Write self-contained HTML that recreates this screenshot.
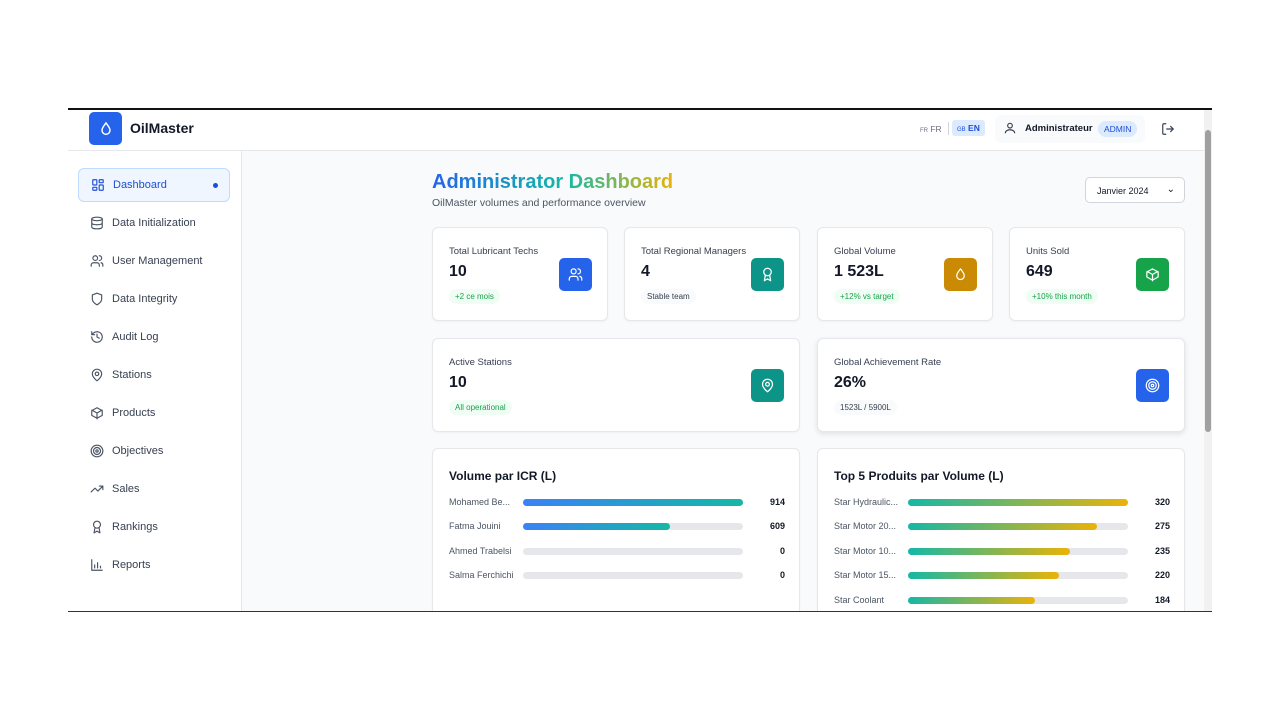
<!DOCTYPE html><html><head><meta charset="utf-8"><style>
*{box-sizing:border-box;margin:0;padding:0}
body{width:1280px;height:720px;background:#fff;font-family:"Liberation Sans",sans-serif;position:relative;overflow:hidden;color:#111827}
.frame{position:absolute;left:68px;top:108px;width:1144px;height:504px;border-top:2px solid #111;border-bottom:1px solid #333;overflow:hidden;background:#f8fafc}
.hdr{position:absolute;left:0;top:0;width:1136px;height:41px;background:#fff;border-bottom:1px solid #e5e7eb}
.side{position:absolute;left:0;top:41px;width:174px;height:470px;background:#fff;border-right:1px solid #e5e7eb}
.a{position:absolute}
.nav{position:absolute;left:10px;width:152px;height:34px;display:flex;align-items:center;padding-left:12px;font-size:11px;color:#374151;gap:8px}
.nav svg{width:14px;height:14px;fill:none;stroke:#4b5563;stroke-width:2;stroke-linecap:round;stroke-linejoin:round}
.card{position:absolute;background:#fff;border:1px solid #e5e7eb;border-radius:6px;box-shadow:0 1px 2px rgba(0,0,0,.04)}
.lab{position:absolute;left:16px;top:18px;font-size:9.5px;color:#374151}
.val{position:absolute;left:16px;top:35px;font-size:16px;font-weight:bold}
.pill{position:absolute;left:16px;top:61px;font-size:8px;padding:3px 6px;border-radius:8px}
.g{background:#f0fdf4;color:#16a34a}.n{background:#f9fafb;color:#374151}
.ic{position:absolute;top:30px;width:33px;height:33px;border-radius:5px;display:flex;align-items:center;justify-content:center}
.ic svg{width:15px;height:15px;fill:none;stroke:#fff;stroke-width:2;stroke-linecap:round;stroke-linejoin:round}
.row{position:absolute;left:16px;width:336px;height:12px;font-size:9px;color:#4b5563}
.row .t{position:absolute;left:0;top:0}
.row .tr{position:absolute;left:74px;top:2px;width:220px;height:7px;background:#e5e7eb;border-radius:4px}
.row .f{height:7px;border-radius:4px}
.row .v{position:absolute;right:0;top:0;color:#111827;font-weight:bold}
.b1 .f{background:linear-gradient(90deg,#3b82f6,#14b8a6)}
.b2 .f{background:linear-gradient(90deg,#14b8a6,#eab308)}
</style></head><body>
<div class="frame">
<div class="hdr">
 <div class="a" style="left:21px;top:2px;width:33px;height:33px;background:#2563eb;border-radius:5px;display:flex;align-items:center;justify-content:center"><svg width="16" height="16" viewBox="0 0 24 24" fill="none" stroke="#fff" stroke-width="2.2"><path d="M12 3C9 7 6 10 6 14a6 6 0 0 0 12 0c0-4-3-7-6-11z"/></svg></div>
 <div class="a" style="left:62px;top:10px;font-size:14px;font-weight:bold">OilMaster</div>
 <div class="a" style="left:852px;top:14px;font-size:8.5px;color:#6b7280"><span style="font-size:6px">FR</span> FR</div>
 <div class="a" style="left:880px;top:12px;width:1px;height:13px;background:#d1d5db"></div>
 <div class="a" style="left:884px;top:10px;padding:3px 5px;background:#dbeafe;border-radius:3px;font-size:8.5px;color:#1d4ed8;font-weight:bold"><span style="font-size:6px;font-weight:normal">GB</span> EN</div>
 <div class="a" style="left:927px;top:5px;width:150px;height:28px;background:#f9fafb;border-radius:6px"></div>
 <svg class="a" style="left:935px;top:11px" width="14" height="14" viewBox="0 0 24 24" fill="none" stroke="#374151" stroke-width="2"><circle cx="12" cy="8" r="4"/><path d="M4 21c0-4 4-6 8-6s8 2 8 6"/></svg>
 <div class="a" style="left:957px;top:13px;font-size:9.5px;font-weight:bold;color:#111827">Administrateur</div>
 <div class="a" style="left:1030px;top:11px;padding:3px 6px;background:#dbeafe;border-radius:8px;font-size:8.5px;color:#1d4ed8">ADMIN</div>
 <svg class="a" style="left:1093px;top:12px" width="14" height="14" viewBox="0 0 24 24" fill="none" stroke="#374151" stroke-width="2"><path d="M9 21H5a2 2 0 0 1-2-2V5a2 2 0 0 1 2-2h4M16 17l5-5-5-5M21 12H9"/></svg>
</div>
<div class="a" style="left:1136px;top:0;width:8px;height:504px;background:#f1f1f1"></div>
<div class="a" style="left:1137px;top:20px;width:6px;height:302px;background:#a0a0a0;border-radius:3px"></div>
<div class="side">
 <div class="nav" style="top:17px;background:#eff6ff;border:1px solid #bfdbfe;border-radius:6px;color:#1d4ed8"><svg style="stroke:#1d4ed8" viewBox="0 0 24 24"><rect x="3" y="3" width="7" height="9" rx="1"/><rect x="14" y="3" width="7" height="5" rx="1"/><rect x="14" y="12" width="7" height="9" rx="1"/><rect x="3" y="16" width="7" height="5" rx="1"/></svg>Dashboard<span style="position:absolute;right:11px;width:5px;height:5px;border-radius:50%;background:#1d4ed8"></span></div>
 <div class="nav" style="top:55px"><svg viewBox="0 0 24 24"><ellipse cx="12" cy="5" rx="9" ry="3"/><path d="M3 5v14c0 1.7 4 3 9 3s9-1.3 9-3V5M3 12c0 1.7 4 3 9 3s9-1.3 9-3"/></svg>Data Initialization</div>
 <div class="nav" style="top:93px"><svg viewBox="0 0 24 24"><circle cx="9" cy="7" r="4"/><path d="M2 21v-2a4 4 0 0 1 4-4h6a4 4 0 0 1 4 4v2M16 3a4 4 0 0 1 0 8M22 21v-2a4 4 0 0 0-3-4"/></svg>User Management</div>
 <div class="nav" style="top:131px"><svg viewBox="0 0 24 24"><path d="M12 22s8-4 8-10V5l-8-3-8 3v7c0 6 8 10 8 10z"/></svg>Data Integrity</div>
 <div class="nav" style="top:169px"><svg viewBox="0 0 24 24"><path d="M3 12a9 9 0 1 0 3-6.7L3 8M3 3v5h5M12 7v5l4 2"/></svg>Audit Log</div>
 <div class="nav" style="top:207px"><svg viewBox="0 0 24 24"><path d="M20 10c0 6-8 12-8 12s-8-6-8-12a8 8 0 0 1 16 0z"/><circle cx="12" cy="10" r="3"/></svg>Stations</div>
 <div class="nav" style="top:245px"><svg viewBox="0 0 24 24"><path d="M21 16V8l-9-5-9 5v8l9 5 9-5zM3.3 7L12 12l8.7-5M12 22V12"/></svg>Products</div>
 <div class="nav" style="top:283px"><svg viewBox="0 0 24 24"><circle cx="12" cy="12" r="10"/><circle cx="12" cy="12" r="6"/><circle cx="12" cy="12" r="2"/></svg>Objectives</div>
 <div class="nav" style="top:321px"><svg viewBox="0 0 24 24"><path d="M22 7l-8.5 8.5-5-5L2 17M16 7h6v6"/></svg>Sales</div>
 <div class="nav" style="top:359px"><svg viewBox="0 0 24 24"><circle cx="12" cy="8" r="6"/><path d="M15.5 13L17 22l-5-3-5 3 1.5-9"/></svg>Rankings</div>
 <div class="nav" style="top:397px"><svg viewBox="0 0 24 24"><path d="M3 3v18h18M8 17v-5M13 17V8M18 17v-3"/></svg>Reports</div>
</div>
<div class="a" style="left:364px;top:61px;font-size:20px;font-weight:bold;background:linear-gradient(90deg,#2563eb,#14b8a6 55%,#eab308);-webkit-background-clip:text;color:transparent">Administrator Dashboard</div>
<div class="a" style="left:364px;top:87px;font-size:10.5px;color:#4b5563">OilMaster volumes and performance overview</div>
<div class="a" style="left:1017px;top:67px;width:100px;height:26px;background:#fff;border:1px solid #d1d5db;border-radius:5px;font-size:9px;padding:8px 0 0 11px">Janvier 2024<span style="position:absolute;right:9px;top:6px;font-size:10px">&#8964;</span></div>

<div class="card" style="left:364px;top:117px;width:176px;height:94px"><div class="lab">Total Lubricant Techs</div><div class="val">10</div><div class="pill g">+2 ce mois</div><div class="ic" style="left:126px;background:#2563eb"><svg viewBox="0 0 24 24"><circle cx="9" cy="7" r="4"/><path d="M2 21v-2a4 4 0 0 1 4-4h6a4 4 0 0 1 4 4v2M16 3a4 4 0 0 1 0 8M22 21v-2a4 4 0 0 0-3-4"/></svg></div></div>
<div class="card" style="left:556px;top:117px;width:176px;height:94px"><div class="lab">Total Regional Managers</div><div class="val">4</div><div class="pill n">Stable team</div><div class="ic" style="left:126px;background:#0d9488"><svg viewBox="0 0 24 24"><circle cx="12" cy="8" r="6"/><path d="M15.5 13L17 22l-5-3-5 3 1.5-9"/></svg></div></div>
<div class="card" style="left:749px;top:117px;width:176px;height:94px"><div class="lab">Global Volume</div><div class="val">1 523L</div><div class="pill g">+12% vs target</div><div class="ic" style="left:126px;background:#ca8a04"><svg viewBox="0 0 24 24"><path d="M12 3C9 7 6 10 6 14a6 6 0 0 0 12 0c0-4-3-7-6-11z"/></svg></div></div>
<div class="card" style="left:941px;top:117px;width:176px;height:94px"><div class="lab">Units Sold</div><div class="val">649</div><div class="pill g">+10% this month</div><div class="ic" style="left:126px;background:#16a34a"><svg viewBox="0 0 24 24"><path d="M21 16V8l-9-5-9 5v8l9 5 9-5zM3.3 7L12 12l8.7-5M12 22V12"/></svg></div></div>
<div class="card" style="left:364px;top:228px;width:368px;height:94px"><div class="lab">Active Stations</div><div class="val">10</div><div class="pill g">All operational</div><div class="ic" style="left:318px;background:#0d9488"><svg viewBox="0 0 24 24"><path d="M20 10c0 6-8 12-8 12s-8-6-8-12a8 8 0 0 1 16 0z"/><circle cx="12" cy="10" r="3"/></svg></div></div>
<div class="card" style="left:749px;top:228px;width:368px;height:94px;box-shadow:0 2px 6px rgba(0,0,0,.1)"><div class="lab">Global Achievement Rate</div><div class="val">26%</div><div class="pill n">1523L / 5900L</div><div class="ic" style="left:318px;background:#2563eb"><svg viewBox="0 0 24 24"><circle cx="12" cy="12" r="10"/><circle cx="12" cy="12" r="6"/><circle cx="12" cy="12" r="2"/></svg></div></div>

<div class="card" style="left:364px;top:338px;width:368px;height:200px">
 <div class="a" style="left:16px;top:20px;font-size:12px;font-weight:bold">Volume par ICR (L)</div>
 <div class="row b1" style="top:48px"><span class="t">Mohamed Be...</span><div class="tr"><div class="f" style="width:100%"></div></div><span class="v">914</span></div>
 <div class="row b1" style="top:72px"><span class="t">Fatma Jouini</span><div class="tr"><div class="f" style="width:66.6%"></div></div><span class="v">609</span></div>
 <div class="row b1" style="top:97px"><span class="t">Ahmed Trabelsi</span><div class="tr"></div><span class="v">0</span></div>
 <div class="row b1" style="top:121px"><span class="t">Salma Ferchichi</span><div class="tr"></div><span class="v">0</span></div>
</div>
<div class="card" style="left:749px;top:338px;width:368px;height:200px">
 <div class="a" style="left:16px;top:20px;font-size:12px;font-weight:bold">Top 5 Produits par Volume (L)</div>
 <div class="row b2" style="top:48px"><span class="t">Star Hydraulic...</span><div class="tr"><div class="f" style="width:100%"></div></div><span class="v">320</span></div>
 <div class="row b2" style="top:72px"><span class="t">Star Motor 20...</span><div class="tr"><div class="f" style="width:86%"></div></div><span class="v">275</span></div>
 <div class="row b2" style="top:97px"><span class="t">Star Motor 10...</span><div class="tr"><div class="f" style="width:73.5%"></div></div><span class="v">235</span></div>
 <div class="row b2" style="top:121px"><span class="t">Star Motor 15...</span><div class="tr"><div class="f" style="width:68.8%"></div></div><span class="v">220</span></div>
 <div class="row b2" style="top:146px"><span class="t">Star Coolant</span><div class="tr"><div class="f" style="width:57.5%"></div></div><span class="v">184</span></div>
</div>
</div>
</body></html>
